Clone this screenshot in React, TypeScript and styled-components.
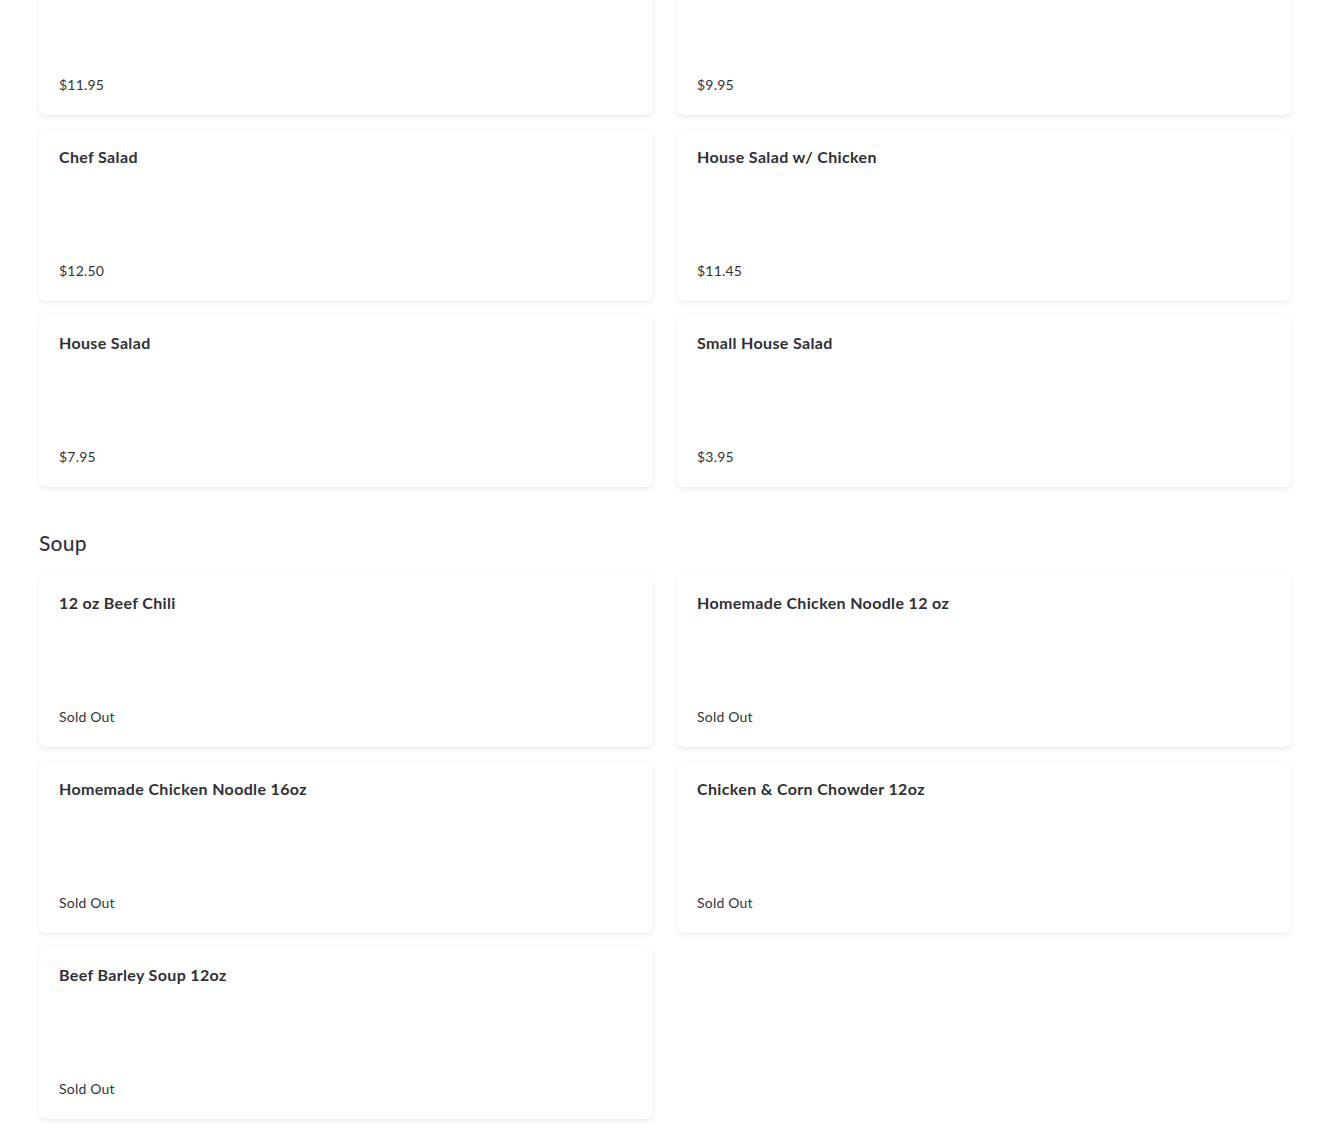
import styled, { createGlobalStyle } from "styled-components";

const GlobalStyle = createGlobalStyle`
  html, body {
    margin: 0;
    padding: 0;
    background: #ffffff;
    overflow: hidden;
  }
  body {
    font-family: Lato, "Noto Sans", "Liberation Sans", sans-serif;
    color: #2f3037;
  }
`;

const Page = styled.div`
  padding: 0 39px 24px;
  margin-top: -57px;
`;

const Section = styled.section`
  display: flex;
  flex-direction: column;
`;

const SectionTitle = styled.h2`
  margin: 42px 0 18px;
  font-size: 21px;
  font-weight: 500;
  line-height: 28px;
  letter-spacing: 0.2px;
  color: #33343b;
`;

const Grid = styled.div`
  display: grid;
  grid-template-columns: repeat(2, 1fr);
  column-gap: 24px;
  row-gap: 14px;
`;

const Card = styled.div`
  height: 172px;
  box-sizing: border-box;
  padding: 16px 20px 20px;
  display: flex;
  flex-direction: column;
  justify-content: space-between;
  background: #ffffff;
  border-radius: 6px;
  box-shadow: 0 2px 5px rgba(0, 0, 0, 0.08), 0 0 1px rgba(0, 0, 0, 0.05);
`;

const ItemName = styled.div`
  font-size: 16px;
  font-weight: 700;
  line-height: 24px;
  letter-spacing: 0.35px;
  color: #2f3037;
`;

const ItemPrice = styled.div`
  font-size: 14px;
  line-height: 20px;
  letter-spacing: 0.2px;
  color: #33343b;
`;

interface MenuItem {
  name: string;
  price?: string;
}

const salad: MenuItem[] = [
  { name: "", price: "$11.95" },
  { name: "", price: "$9.95" },
  { name: "Chef Salad", price: "$12.50" },
  { name: "House Salad w/ Chicken", price: "$11.45" },
  { name: "House Salad", price: "$7.95" },
  { name: "Small House Salad", price: "$3.95" },
];

const soup: MenuItem[] = [
  { name: "12 oz Beef Chili" },
  { name: "Homemade Chicken Noodle 12 oz" },
  { name: "Homemade Chicken Noodle 16oz" },
  { name: "Chicken & Corn Chowder 12oz" },
  { name: "Beef Barley Soup 12oz" },
];

const ItemCard = ({ item }: { item: MenuItem }) => (
  <Card>
    <ItemName>{item.name}</ItemName>
    <ItemPrice>{item.price ?? "Sold Out"}</ItemPrice>
  </Card>
);

const App = () => (
  <>
    <GlobalStyle />
    <Page>
      <Section>
        <Grid>
          {salad.map((item, i) => (
            <ItemCard key={i} item={item} />
          ))}
        </Grid>
      </Section>
      <Section>
        <SectionTitle>Soup</SectionTitle>
        <Grid>
          {soup.map((item, i) => (
            <ItemCard key={i} item={item} />
          ))}
        </Grid>
      </Section>
    </Page>
  </>
);

export default App;
